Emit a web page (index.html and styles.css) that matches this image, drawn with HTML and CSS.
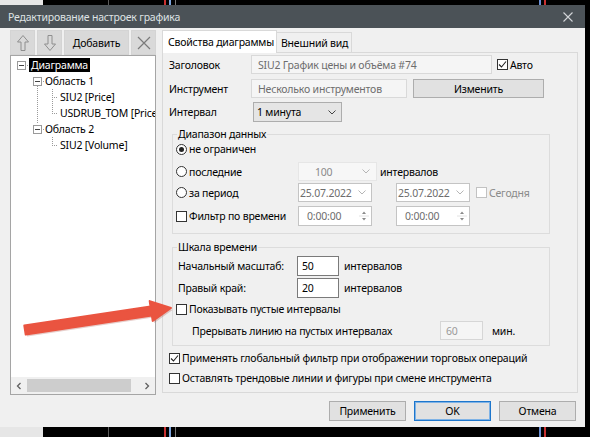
FILE: index.html
```html
<!DOCTYPE html>
<html lang="ru">
<head>
<meta charset="utf-8">
<title>Редактирование настроек графика</title>
<link rel="stylesheet" href="styles.css">
</head>
<body>
<div class="dialog">
  <div class="titlebar">
    <span class="title">Редактирование настроек графика</span>
    <svg class="close" width="12" height="12" viewBox="0 0 12 12"><path d="M1.5 1.5L10.5 10.5M10.5 1.5L1.5 10.5" stroke="#d3d6d8" stroke-width="1.1"/></svg>
  </div>
  <div class="main">
    <div class="left">
      <div class="toolbar">
        <button class="tbtn icon-btn"><svg width="14" height="18" viewBox="0 0 14 18"><path d="M7 1.5L12.5 8H9V16.5H5V8H1.5Z" fill="none" stroke="#8e8e8e"/></svg></button>
        <button class="tbtn icon-btn"><svg width="14" height="18" viewBox="0 0 14 18"><path d="M7 16.5L12.5 10H9V1.5H5V10H1.5Z" fill="none" stroke="#8e8e8e"/></svg></button>
        <button class="tbtn add-btn">Добавить</button>
        <button class="tbtn icon-btn"><svg width="14" height="14" viewBox="0 0 14 14"><path d="M1 1L13 13M13 1L1 13" stroke="#7a7a7a" stroke-width="1.2"/></svg></button>
      </div>
      <div class="tree">
        <svg class="tree-lines" width="144" height="120" viewBox="0 0 144 120">
          <g stroke="#9a9a9a" stroke-dasharray="1 1" fill="none">
            <path d="M14 9.5H18"/>
            <path d="M30 25.5H33"/>
            <path d="M30 73.5H33"/>
            <path d="M26.5 30V68"/>
            <path d="M41.5 33V57"/>
            <path d="M41 41.5H47"/>
            <path d="M41 57.5H47"/>
            <path d="M41.5 81V89"/>
            <path d="M41 89.5H47"/>
          </g>
        </svg>
        <div class="tree-body">
          <div class="node lvl0"><span class="exp"></span><span class="node-label selected">Диаграмма</span></div>
          <div class="node lvl1"><span class="exp"></span><span class="node-label">Область 1</span></div>
          <div class="node lvl2"><span class="node-label">SIU2 [Price]</span></div>
          <div class="node lvl2"><span class="node-label">USDRUB_TOM [Price]</span></div>
          <div class="node lvl1"><span class="exp"></span><span class="node-label">Область 2</span></div>
          <div class="node lvl2"><span class="node-label">SIU2 [Volume]</span></div>
        </div>
        <div class="hscroll">
          <span class="sb-arrow"><svg width="6" height="8" viewBox="0 0 6 8"><path d="M4.5 1L1.5 4L4.5 7" fill="none" stroke="#606060" stroke-width="1.3"/></svg></span>
          <span class="sb-thumb"></span>
          <span class="sb-track"></span>
          <span class="sb-arrow"><svg width="6" height="8" viewBox="0 0 6 8"><path d="M1.5 1L4.5 4L1.5 7" fill="none" stroke="#606060" stroke-width="1.3"/></svg></span>
        </div>
      </div>
    </div>
    <div class="right">
      <div class="tabs">
        <div class="tab active">Свойства диаграммы</div>
        <div class="tab">Внешний вид</div>
      </div>
      <div class="panel">
        <div class="frow r1">
          <span class="flabel">Заголовок</span>
          <span class="field dis w-title">SIU2 График цены и объёма #74</span>
          <span class="check auto"><span class="cb"><svg width="9" height="9" viewBox="0 0 9 9"><path d="M1 4.5L3.5 7L8 1.5" fill="none" stroke="#222" stroke-width="1.1"/></svg></span>Авто</span>
        </div>
        <div class="frow r2">
          <span class="flabel">Инструмент</span>
          <span class="field dis w-instr">Несколько инструментов</span>
          <button class="btn change">Изменить</button>
        </div>
        <div class="frow r3">
          <span class="flabel">Интервал</span>
          <span class="dropdown">1 минута<svg width="8" height="5" viewBox="0 0 8 5"><path d="M0.5 0.5L4 4L7.5 0.5" fill="none" stroke="#444"/></svg></span>
        </div>

        <fieldset class="group g1">
          <legend>Диапазон данных</legend>
          <div class="grow gr1"><span class="radio on"></span>не ограничен</div>
          <div class="grow gr2">
            <span class="opt"><span class="radio"></span>последние</span>
            <span class="combo c100">100<svg width="8" height="5" viewBox="0 0 8 5"><path d="M0.5 0.5L4 4L7.5 0.5" fill="none" stroke="#b5b5b5"/></svg></span>
            <span class="unit">интервалов</span>
          </div>
          <div class="grow gr3">
            <span class="opt"><span class="radio"></span>за период</span>
            <span class="combo date">25.07.2022<svg width="8" height="5" viewBox="0 0 8 5"><path d="M0.5 0.5L4 4L7.5 0.5" fill="none" stroke="#b5b5b5"/></svg></span>
            <span class="combo date second">25.07.2022<svg width="8" height="5" viewBox="0 0 8 5"><path d="M0.5 0.5L4 4L7.5 0.5" fill="none" stroke="#b5b5b5"/></svg></span>
            <span class="check today"><span class="cb dim"></span>Сегодня</span>
          </div>
          <div class="grow gr4">
            <span class="opt"><span class="cb"></span>Фильтр по времени</span>
            <span class="spin">0:00:00<span class="spin-btns"><svg width="10" height="16" viewBox="0 0 10 16"><path d="M3 6L5 3.5L7 6Z M3 10L5 12.5L7 10Z" fill="#8a8a8a"/><path d="M0 8H10" stroke="#e2e2e2"/></svg></span></span>
            <span class="spin second">0:00:00<span class="spin-btns"><svg width="10" height="16" viewBox="0 0 10 16"><path d="M3 6L5 3.5L7 6Z M3 10L5 12.5L7 10Z" fill="#8a8a8a"/><path d="M0 8H10" stroke="#e2e2e2"/></svg></span></span>
          </div>
        </fieldset>

        <fieldset class="group g2">
          <legend>Шкала времени</legend>
          <div class="grow h1"><span class="hlabel">Начальный масштаб:</span><span class="num">50</span><span class="unit u2">интервалов</span></div>
          <div class="grow h2"><span class="hlabel">Правый край:</span><span class="num">20</span><span class="unit u2">интервалов</span></div>
          <div class="grow h3"><span class="cb"></span>Показывать пустые интервалы</div>
          <div class="grow h4"><span class="blabel">Прерывать линию на пустых интервалах</span><span class="num dis n60">60</span><span class="unit u3">мин.</span></div>
        </fieldset>

        <div class="frow c1"><span class="cb"><svg width="9" height="9" viewBox="0 0 9 9"><path d="M1 4.5L3.5 7L8 1.5" fill="none" stroke="#222" stroke-width="1.1"/></svg></span>Применять глобальный фильтр при отображении торговых операций</div>
        <div class="frow c2"><span class="cb"></span>Оставлять трендовые линии и фигуры при смене инструмента</div>
      </div>
    </div>
  </div>
  <div class="footer">
    <button class="btn fbtn">Применить</button>
    <button class="btn fbtn ok">OK</button>
    <button class="btn fbtn">Отмена</button>
  </div>
</div>
<svg class="arrow" width="590" height="437" viewBox="0 0 590 437">
  <polygon points="24.3,325.5 150.5,306.5 149.7,301.1 171,308 152.7,320.9 151.9,315.5 25.7,334.5" fill="#9a3a2e" opacity="0.25" transform="translate(1.5,2)"/>
  <polygon points="24.3,325.5 150.5,306.5 149.7,301.1 171,308 152.7,320.9 151.9,315.5 25.7,334.5" fill="#ea5440" stroke="#ea5440" stroke-width="2" stroke-linejoin="round"/>
</svg>
</body>
</html>
```
FILE: styles.css
```css
* { box-sizing: border-box; }
html, body { margin: 0; padding: 0; }
body {
  width: 590px;
  height: 437px;
  overflow: hidden;
  position: relative;
  padding-top: 5px;
  font-family: "Noto Sans", "Open Sans", sans-serif;
  font-size: 10.5px;
  letter-spacing: -0.2px;
  color: #000;
  background: linear-gradient(to right,
    #e6e6e6 0 43px, #000 43px 108px, #5a5a5a 108px 109px, #000 109px 164px,
    #c93030 164px 166px, #000 166px 169px, #7ea6e0 169px 171px, #000 171px 175px,
    #777 175px 176px, #000 176px 539px, #6a8fd6 539px 541px, #000 541px 544px,
    #c93030 544px 546px, #000 546px);
}

.dialog {
  width: 585px;
  height: 422px;
  background: #f0f0f0;
  display: flex;
  flex-direction: column;
}

.titlebar {
  height: 23px;
  flex: none;
  background: #4b5257;
  color: #dfe2e4;
  display: flex;
  align-items: center;
  justify-content: space-between;
  padding: 0 11px 0 8px;
}

.main {
  height: 367px;
  flex: none;
  display: flex;
  gap: 6px;
  padding: 2px 7px 0 10px;
}

/* left column */
.left { width: 146px; display: flex; flex-direction: column; }
.toolbar { height: 25px; display: flex; gap: 2px; flex: none; }
.tbtn {
  height: 25px;
  padding: 0;
  border: 1px solid #d4d4d4;
  background: #d9d9d9;
  font: inherit;
  letter-spacing: inherit;
  color: #000;
  display: flex;
  align-items: center;
  justify-content: center;
}
.icon-btn { width: 25px; }
.add-btn { width: 65px; }

.tree {
  flex: 1;
  position: relative;
  background: #fff;
  border: 1px solid #a5a5a5;
  display: flex;
  flex-direction: column;
  overflow: hidden;
}
.tree-lines { position: absolute; left: 0; top: 0; }
.tree-body { flex: 1; padding-top: 1px; position: relative; }
.node { height: 16px; display: flex; align-items: center; white-space: nowrap; }
.lvl0 { padding-left: 6px; }
.lvl1 { padding-left: 22px; }
.lvl2 { padding-left: 49px; }
.exp {
  width: 9px; height: 9px; flex: none;
  border: 1px solid #9a9a9a;
  background: #fff;
  margin-right: 3px;
  position: relative;
}
.exp::after {
  content: "";
  position: absolute;
  left: 1px; right: 1px; top: 3px;
  height: 1px;
  background: #444;
}
.node-label { line-height: 14px; }
.selected { background: #000; color: #fff; padding: 0 2px; }

.hscroll { height: 17px; flex: none; background: #f0f0f0; display: flex; align-items: center; }
.sb-arrow { width: 16px; height: 17px; display: flex; align-items: center; justify-content: center; }
.sb-thumb { width: 104px; height: 13px; background: #cdcdcd; }
.sb-track { flex: 1; }

/* right column */
.right { width: 416px; display: flex; flex-direction: column; }
.tabs { height: 22px; flex: none; display: flex; align-items: flex-end; position: relative; z-index: 1; }
.tab {
  height: 20px;
  width: 75px;
  border: 1px solid #d9d9d9;
  border-bottom: none;
  border-left: none;
  background: #f0f0f0;
  padding-left: 4px;
  display: flex;
  align-items: center;
  white-space: nowrap;
}
.tab.active {
  width: 115px;
  height: 23px;
  margin-bottom: -1px;
  border-left: 1px solid #d9d9d9;
  background: #fff;
  padding-left: 5px;
}
.panel {
  height: 341px;
  border: 1px solid #d9d9d9;
  background: #f0f0f0;
  padding: 1px 0 0 6px;
}

.frow { display: flex; align-items: center; white-space: nowrap; }
.r1 { height: 19px; margin-top: 1px; }
.r2 { height: 19px; margin-top: 5px; }
.r3 { height: 20px; margin-top: 4px; }
.flabel { width: 82px; flex: none; }

.field {
  height: 19px;
  border: 1px solid #d9d9d9;
  background: #f5f5f5;
  color: #6d6d6d;
  padding-left: 6px;
  display: flex;
  align-items: center;
  overflow: hidden;
}
.w-title { width: 241px; }
.w-instr { width: 156px; }

.check { display: flex; align-items: center; }
.auto { margin-left: 5px; }

.cb {
  width: 11px; height: 11px; flex: none;
  border: 1px solid #333;
  background: #fff;
  margin-right: 2px;
  display: flex; align-items: center; justify-content: center;
}
.cb.dim { border-color: #c2c2c2; }

.radio {
  width: 11px; height: 11px; flex: none;
  border: 1px solid #333;
  border-radius: 50%;
  background: #fff;
  margin-right: 2px;
  display: flex; align-items: center; justify-content: center;
}
.radio.on::after { content: ""; width: 5px; height: 5px; border-radius: 50%; background: #222; }

.btn {
  font: inherit;
  letter-spacing: inherit;
  color: #000;
  background: #e1e1e1;
  border: 1px solid #adadad;
  padding: 0;
}
.change { width: 131px; height: 19px; margin-left: 6px; }

.dropdown {
  width: 89px; height: 20px;
  margin-left: 2px;
  background: #e5e5e5;
  border: 1px solid #adadad;
  padding: 0 5px 0 3px;
  display: flex; align-items: center; justify-content: space-between;
}

.group {
  margin: 4px 0 0 3px;
  padding: 0 0 7px 3px;
  border: 1px solid #dcdcdc;
  width: 378px;
  min-width: 0;
}
.group legend { padding: 0 1px; margin-left: 1px; line-height: 16px; }
.g2 { margin-top: 5px; padding-bottom: 5px; }

.grow { display: flex; align-items: center; white-space: nowrap; }
.gr1 { height: 14px; }
.gr2 { height: 19px; margin-top: 6px; }
.gr3 { height: 19px; margin-top: 2px; }
.gr4 { height: 20px; margin-top: 4px; }
.opt { width: 122px; flex: none; display: flex; align-items: center; }

.combo {
  height: 19px;
  display: flex; align-items: center; justify-content: space-between;
  color: #6d6d6d;
}
.c100 { width: 79px; background: #f7f7f7; border: 1px solid #e6e6e6; padding: 0 6px 0 16px; color: #8a8a8a; }
.date { width: 74px; background: #fff; border: 1px solid #c4c4c4; padding: 0 5px 0 1px; }
.date.second { margin-left: 24px; }
.unit { margin-left: 3px; }
.today { margin-left: 6px; color: #8a8a8a; }

.spin {
  width: 74px; height: 20px;
  background: #fff;
  border: 1px solid #c4c4c4;
  color: #6d6d6d;
  padding-left: 8px;
  display: flex; align-items: center; justify-content: space-between;
}
.spin.second { margin-left: 24px; }
.spin-btns { width: 12px; height: 18px; display: flex; align-items: center; justify-content: center; margin-right: 1px; }

.h1 { height: 20px; margin-top: 1px; }
.h2 { height: 20px; margin-top: 2px; }
.h3 { height: 14px; margin-top: 4px; }
.h4 { height: 19px; margin-top: 5px; }
.hlabel { width: 121px; padding-left: 2px; flex: none; }
.num {
  width: 42px; height: 20px;
  background: #fff;
  border: 1px solid #7a7a7a;
  padding-left: 4px;
  display: flex; align-items: center;
}
.u2 { margin-left: 5px; }
.blabel { width: 264px; padding-left: 16px; flex: none; }
.num.dis { background: #f5f5f5; border-color: #d6d6d6; color: #9a9a9a; }
.n60 { width: 43px; height: 19px; padding-left: 5px; }
.u3 { margin-left: 9px; }

.c1 { height: 14px; margin-top: 5px; }
.c2 { height: 14px; margin-top: 6px; }

.footer {
  flex: none;
  display: flex;
  justify-content: flex-end;
  gap: 8px;
  padding: 6px 9px 0 0;
}
.fbtn { width: 77px; height: 20px; }
.ok { border-color: #1d76cc; box-shadow: inset 0 0 0 1px #7fb3e6; }

.arrow { position: absolute; left: 0; top: 0; pointer-events: none; }
```
